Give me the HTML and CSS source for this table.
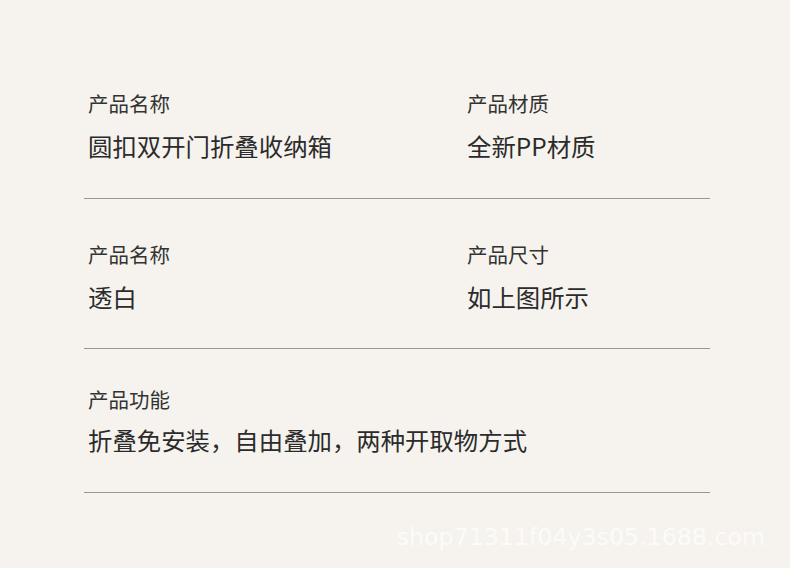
FILE: index.html
```html
<!DOCTYPE html>
<html lang="zh">
<head>
<meta charset="utf-8">
<link rel="stylesheet" href="styles.css">
</head>
<body>
<main class="sheet">
  <section class="row row-first">
    <div class="cell">
      <div class="label">产品名称</div>
      <div class="value">圆扣双开门折叠收纳箱</div>
    </div>
    <div class="cell">
      <div class="label">产品材质</div>
      <div class="value">全新PP材质</div>
    </div>
  </section>
  <section class="row">
    <div class="cell">
      <div class="label">产品名称</div>
      <div class="value">透白</div>
    </div>
    <div class="cell">
      <div class="label">产品尺寸</div>
      <div class="value">如上图所示</div>
    </div>
  </section>
  <section class="row row-last">
    <div class="cell cell-wide">
      <div class="label">产品功能</div>
      <div class="value">折叠免安装，自由叠加，两种开取物方式</div>
    </div>
  </section>
  <footer class="mark">shop71311f04y3s05.1688.com</footer>
</main>
</body>
</html>
```
FILE: styles.css
```css
html, body {
  margin: 0;
  padding: 0;
}
body {
  background: #f6f3ee;
  width: 790px;
  height: 568px;
  overflow: hidden;
  font-family: "Noto Sans CJK SC", "Noto Sans", sans-serif;
  color: #2f2f2f;
}
.sheet {
  padding: 48px 80px 0 84px;
  display: flex;
  flex-direction: column;
}
.row {
  display: grid;
  grid-template-columns: 379px 1fr;
  padding: 40px 0 34px 4px;
  border-bottom: 1px solid #9a9896;
}
.row-first {
  padding-bottom: 35px;
}
.row-last {
  padding-top: 35px;
  padding-bottom: 35px;
}
.cell {
  display: flex;
  flex-direction: column;
  gap: 11px;
}
.row-last .cell {
  gap: 9px;
}
.cell-wide {
  grid-column: 1 / 3;
}
.label {
  font-size: 20.5px;
  line-height: 30px;
  color: #333;
}
.value {
  font-size: 24.4px;
  line-height: 34px;
  color: #2b2b2b;
}
.mark {
  margin-top: 29px;
  margin-right: -55px;
  text-align: right;
  font-family: "DejaVu Sans", sans-serif;
  font-size: 23.7px;
  line-height: 30px;
  color: #fcfbf8;
}
```
